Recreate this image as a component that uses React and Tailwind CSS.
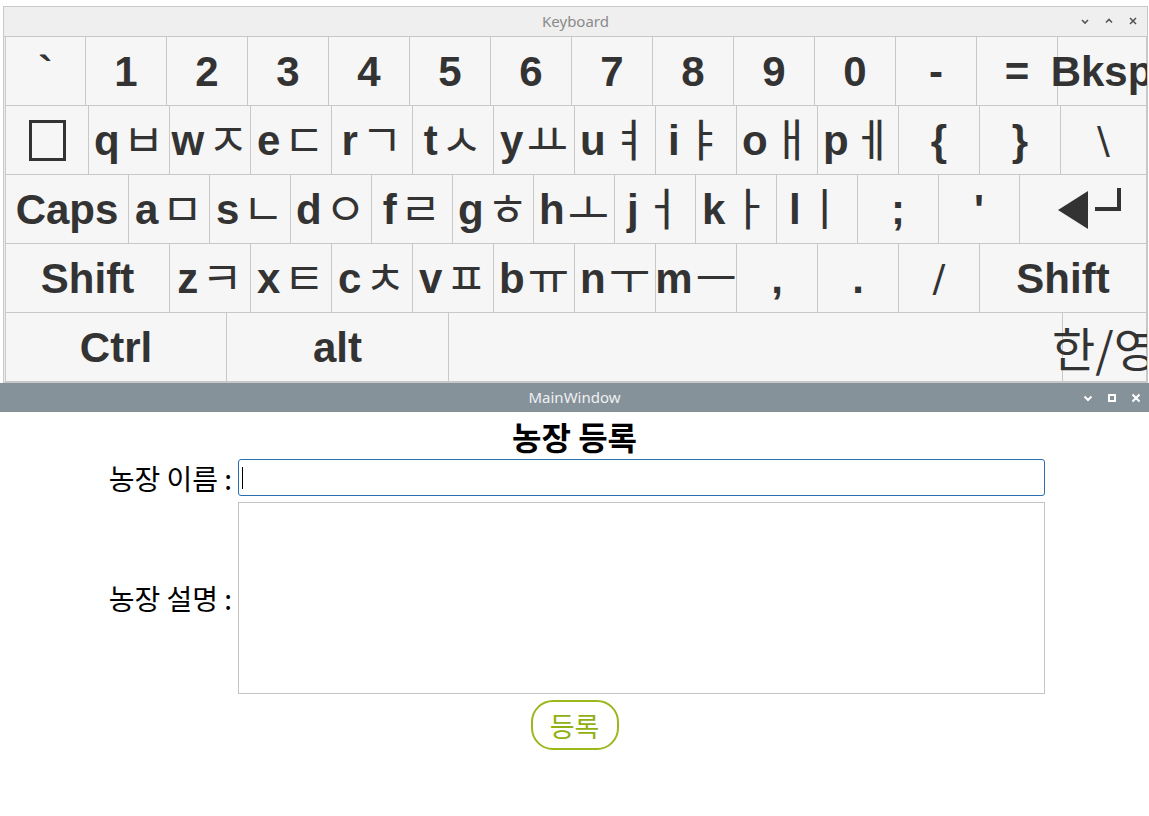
import React from 'react';

const kr = "font-['Noto_Sans_CJK_KR',sans-serif]";

const rows = [
  [
    { w: 'w-[81px]', t: '`', sym: true },
    { w: 'w-[81px]', t: '1' },
    { w: 'w-[81px]', t: '2' },
    { w: 'w-[81px]', t: '3' },
    { w: 'w-[81px]', t: '4' },
    { w: 'w-[81px]', t: '5' },
    { w: 'w-[81px]', t: '6' },
    { w: 'w-[81px]', t: '7' },
    { w: 'w-[81px]', t: '8' },
    { w: 'w-[81px]', t: '9' },
    { w: 'w-[81px]', t: '0' },
    { w: 'w-[81px]', t: '-' },
    { w: 'w-[81px]', t: '=' },
    { w: 'flex-1', t: 'Bksp' },
  ],
  [
    { w: 'w-[84px]', tofu: true },
    { w: 'w-[81px]', t: 'q', j: 'ㅂ' },
    { w: 'w-[81px]', t: 'w', j: 'ㅈ' },
    { w: 'w-[81px]', t: 'e', j: 'ㄷ' },
    { w: 'w-[81px]', t: 'r', j: 'ㄱ' },
    { w: 'w-[81px]', t: 't', j: 'ㅅ' },
    { w: 'w-[81px]', t: 'y', j: 'ㅛ' },
    { w: 'w-[81px]', t: 'u', j: 'ㅕ' },
    { w: 'w-[81px]', t: 'i', j: 'ㅑ' },
    { w: 'w-[81px]', t: 'o', j: 'ㅐ' },
    { w: 'w-[81px]', t: 'p', j: 'ㅔ' },
    { w: 'w-[81px]', t: '{' },
    { w: 'w-[81px]', t: '}' },
    { w: 'flex-1', t: '\\', thin: true },
  ],
  [
    { w: 'w-[124px]', t: 'Caps' },
    { w: 'w-[81px]', t: 'a', j: 'ㅁ' },
    { w: 'w-[81px]', t: 's', j: 'ㄴ' },
    { w: 'w-[81px]', t: 'd', j: 'ㅇ' },
    { w: 'w-[81px]', t: 'f', j: 'ㄹ' },
    { w: 'w-[81px]', t: 'g', j: 'ㅎ' },
    { w: 'w-[81px]', t: 'h', j: 'ㅗ' },
    { w: 'w-[81px]', t: 'j', j: 'ㅓ' },
    { w: 'w-[81px]', t: 'k', j: 'ㅏ' },
    { w: 'w-[81px]', t: 'l', j: 'ㅣ' },
    { w: 'w-[81px]', t: ';' },
    { w: 'w-[81px]', t: "'" },
    { w: 'flex-1', enter: true },
  ],
  [
    { w: 'w-[165px]', t: 'Shift' },
    { w: 'w-[81px]', t: 'z', j: 'ㅋ' },
    { w: 'w-[81px]', t: 'x', j: 'ㅌ' },
    { w: 'w-[81px]', t: 'c', j: 'ㅊ' },
    { w: 'w-[81px]', t: 'v', j: 'ㅍ' },
    { w: 'w-[81px]', t: 'b', j: 'ㅠ' },
    { w: 'w-[81px]', t: 'n', j: 'ㅜ' },
    { w: 'w-[81px]', t: 'm', j: 'ㅡ' },
    { w: 'w-[81px]', t: ',' },
    { w: 'w-[81px]', t: '.' },
    { w: 'w-[81px]', t: '/', thin: true },
    { w: 'flex-1', t: 'Shift' },
  ],
  [
    { w: 'w-[222px]', t: 'Ctrl' },
    { w: 'w-[222px]', t: 'alt' },
    { w: 'w-[614px]', t: '' },
    { w: 'flex-1', hanyeong: true },
  ],
];

const EnterGlyph = () => (
  <svg width="64" height="42" viewBox="0 0 64 42" className="ml-[14px]">
    <polygon points="0,22 30,3 30,41" fill="#333" />
    <path d="M37 21 H61 V0" fill="none" stroke="#333" strokeWidth="4" />
  </svg>
);

const KeyLabel = ({ k }) => {
  if (k.tofu) return <div className="h-[41px] w-[37px] border-[3px] border-[#333]" />;
  if (k.enter) return <EnterGlyph />;
  if (k.hanyeong) {
    return <span className={`text-[47px] font-normal text-[#333] ${kr}`}>한/영</span>;
  }
  if (k.thin) {
    return <span className="font-['DejaVu_Sans',sans-serif] text-[38px] font-normal text-[#333]">{k.t}</span>;
  }
  return (
    <span className="flex items-center">
      <span className="font-['Liberation_Sans',sans-serif] text-[42px] font-bold text-[#333]">{k.t}</span>
      {k.j ? <span className={`-mt-[6px] ml-[3px] text-[45px] leading-none font-normal text-[#333] ${kr}`}>{k.j}</span> : null}
    </span>
  );
};

const Keyboard = () => (
  <div className="ml-[3px] mt-[6px] w-[1145px] overflow-hidden border border-[#c8c8c8] bg-[#efefef]">
    <div className="relative flex h-[29px] items-center justify-center">
      <span className="font-['Noto_Sans',sans-serif] text-[15px] text-[#8a8a8a]">Keyboard</span>
      <div className="absolute right-[9px] top-[9px] flex items-center gap-[14px]">
        <svg width="10" height="10" viewBox="0 0 10 10"><path d="M2 4 L5 7 L8 4" fill="none" stroke="#555" strokeWidth="1.6" /></svg>
        <svg width="10" height="10" viewBox="0 0 10 10"><path d="M2 6.5 L5 3.5 L8 6.5" fill="none" stroke="#555" strokeWidth="1.6" /></svg>
        <svg width="10" height="10" viewBox="0 0 10 10"><path d="M2 2 L8 8 M8 2 L2 8" fill="none" stroke="#555" strokeWidth="1.6" /></svg>
      </div>
    </div>
    <div className="border-t border-[#c8c8c8] pl-[1px]">
      {rows.map((row, ri) => (
        <div key={ri} className="flex h-[69px]">
          {row.map((k, ki) => (
            <div
              key={ki}
              className={`${k.w} flex h-full min-w-0 shrink-0 items-center justify-center whitespace-nowrap border-b border-r border-[#c8c8c8] bg-[#f6f6f6] ${ki === 0 ? 'border-l' : ''}`}
            >
              <KeyLabel k={k} />
            </div>
          ))}
        </div>
      ))}
    </div>
  </div>
);

const MainWindow = () => (
  <div className={`flex-1 bg-white ${kr}`}>
    <div className="relative flex h-[29px] items-center justify-center bg-[#86929a]">
      <span className="font-['Noto_Sans',sans-serif] text-[15px] text-[#eef0f2]">MainWindow</span>
      <div className="absolute right-[8px] top-[10px] flex items-center gap-[14px]">
        <svg width="10" height="10" viewBox="0 0 10 10"><path d="M1.5 3.5 L5 7 L8.5 3.5" fill="none" stroke="#fff" strokeWidth="2" /></svg>
        <svg width="10" height="10" viewBox="0 0 10 10"><rect x="2" y="2" width="6" height="6" fill="none" stroke="#fff" strokeWidth="2" /></svg>
        <svg width="10" height="10" viewBox="0 0 10 10"><path d="M1.5 1.5 L8.5 8.5 M8.5 1.5 L1.5 8.5" fill="none" stroke="#fff" strokeWidth="2" /></svg>
      </div>
    </div>
    <div className="flex flex-col">
      <div className="flex h-[47px] items-center justify-center text-[32px] font-bold leading-none text-black">농장 등록</div>
      <div className="grid grid-cols-[232px_807px] gap-x-[6px] gap-y-[6px]">
        <div className="flex items-center justify-end text-[28px] leading-none text-black">농장 이름 :</div>
        <div className="flex h-[37px] items-center rounded-[3px] border border-[#2a6fae] bg-white px-[3px]">
          <div className="h-[22px] w-[1px] bg-black" />
        </div>
        <div className="flex items-center justify-end text-[28px] leading-none text-black">농장 설명 :</div>
        <div className="h-[192px] border border-[#c4c4c4] bg-white" />
      </div>
      <div className="mt-[6px] flex justify-center">
        <div className="flex h-[50px] w-[88px] items-center justify-center rounded-[22px] border-2 border-[#9ab81c] text-[27px] leading-none text-[#8fb010]">등록</div>
      </div>
    </div>
  </div>
);

export default function App() {
  return (
    <div className="flex h-[816px] w-[1149px] flex-col overflow-hidden bg-white">
      <Keyboard />
      <MainWindow />
    </div>
  );
}
